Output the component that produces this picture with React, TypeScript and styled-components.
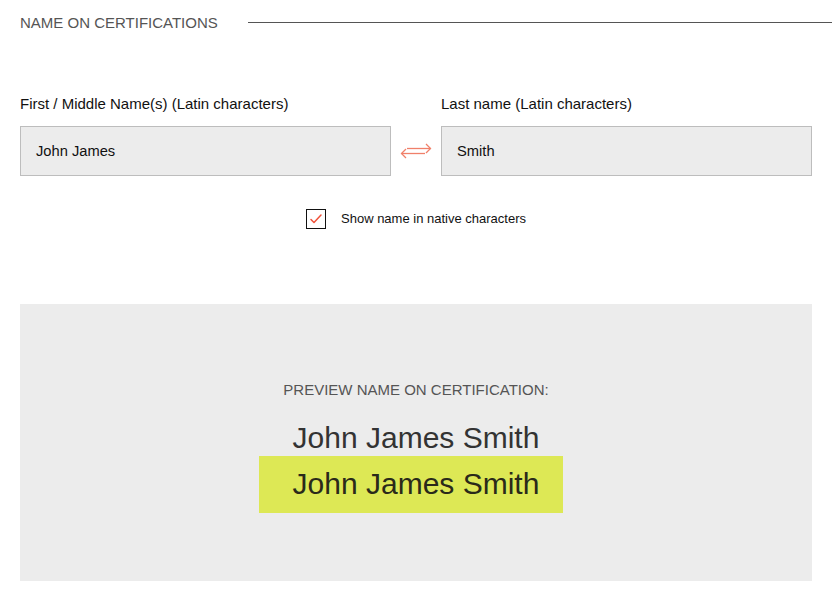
import React from "react";
import styled, { createGlobalStyle } from "styled-components";

const Global = createGlobalStyle`
  html, body { margin: 0; padding: 0; background: #fff; }
  body { font-family: "Liberation Sans", Arial, sans-serif; }
`;

const Page = styled.div`
  width: 837px;
  height: 598px;
  padding: 0 5px 0 20px;
  box-sizing: border-box;
  display: flex;
  flex-direction: column;
`;

const SectionHeader = styled.div`
  display: flex;
  align-items: center;
  gap: 30px;
  height: 44px;
`;

const SectionTitle = styled.h2`
  margin: 0;
  font-size: 15px;
  font-weight: 400;
  color: #555;
  white-space: nowrap;
`;

const Rule = styled.div`
  flex: 1;
  height: 1px;
  background: #555;
`;

const Content = styled.div`
  width: 792px;
  display: flex;
  flex-direction: column;
`;

const NameRow = styled.div`
  display: flex;
  align-items: flex-end;
  margin-top: 50px;
`;

const Field = styled.div`
  flex: 1;
  display: flex;
  flex-direction: column;
  gap: 12px;
`;

const Label = styled.label`
  font-size: 15px;
  color: #111;
  line-height: 20px;
`;

const Input = styled.div`
  height: 50px;
  box-sizing: border-box;
  border: 1px solid #bdbdbd;
  background: #ececec;
  padding: 0 15px;
  display: flex;
  align-items: center;
  font-size: 14.7px;
  color: #111;
`;

const Swap = styled.div`
  width: 50px;
  height: 50px;
  display: flex;
  align-items: center;
  justify-content: center;
  flex-shrink: 0;
`;

const CheckRow = styled.div`
  display: flex;
  align-items: center;
  justify-content: center;
  gap: 15px;
  margin-top: 33px;
`;

const Box = styled.div`
  width: 20px;
  height: 20px;
  box-sizing: border-box;
  border: 1px solid #111;
  display: flex;
  align-items: center;
  justify-content: center;
`;

const CheckLabel = styled.span`
  font-size: 13px;
  line-height: 16px;
  color: #111;
`;

const Preview = styled.div`
  margin-top: 75px;
  height: 277px;
  background: #ececec;
  display: flex;
  flex-direction: column;
  align-items: center;
  padding-top: 77px;
  box-sizing: border-box;
`;

const PreviewTitle = styled.div`
  font-size: 15px;
  line-height: 18px;
  color: #555;
  margin-bottom: 21px;
`;

const PreviewName = styled.div<{ $highlight?: boolean }>`
  font-size: 30px;
  line-height: 36px;
  margin-right: 10px;
  color: ${(p) => (p.$highlight ? "#2a2a1a" : "#333")};
  background: ${(p) => (p.$highlight ? "#dde855" : "transparent")};
  padding: ${(p) => (p.$highlight ? "10px 24px 11px 34px" : "0 24px 0 34px")};
`;

const SwapIcon = () => (
  <svg width="32" height="18" viewBox="0 0 32 18" fill="none" stroke="#f0806a" strokeWidth="1.3">
    <path d="M7 6.5 H30.5" />
    <path d="M26 2 L30.5 6.5 L26 11" />
    <path d="M1.5 11.5 H25" />
    <path d="M6 7 L1.5 11.5 L6 16" />
  </svg>
);

const CheckIcon = () => (
  <svg width="14" height="14" viewBox="0 0 14 14" fill="none" stroke="#f0523a" strokeWidth="1.5" strokeLinecap="round" strokeLinejoin="round">
    <path d="M2 7.5 L5 10.5 L12 3" />
  </svg>
);

export default function App() {
  return (
    <>
      <Global />
      <Page>
        <SectionHeader>
          <SectionTitle>NAME ON CERTIFICATIONS</SectionTitle>
          <Rule />
        </SectionHeader>
        <Content>
          <NameRow>
            <Field>
              <Label>First / Middle Name(s) (Latin characters)</Label>
              <Input>John James</Input>
            </Field>
            <Swap>
              <SwapIcon />
            </Swap>
            <Field>
              <Label>Last name (Latin characters)</Label>
              <Input>Smith</Input>
            </Field>
          </NameRow>
          <CheckRow>
            <Box>
              <CheckIcon />
            </Box>
            <CheckLabel>Show name in native characters</CheckLabel>
          </CheckRow>
          <Preview>
            <PreviewTitle>PREVIEW NAME ON CERTIFICATION:</PreviewTitle>
            <PreviewName>John James Smith</PreviewName>
            <PreviewName $highlight>John James Smith</PreviewName>
          </Preview>
        </Content>
      </Page>
    </>
  );
}
